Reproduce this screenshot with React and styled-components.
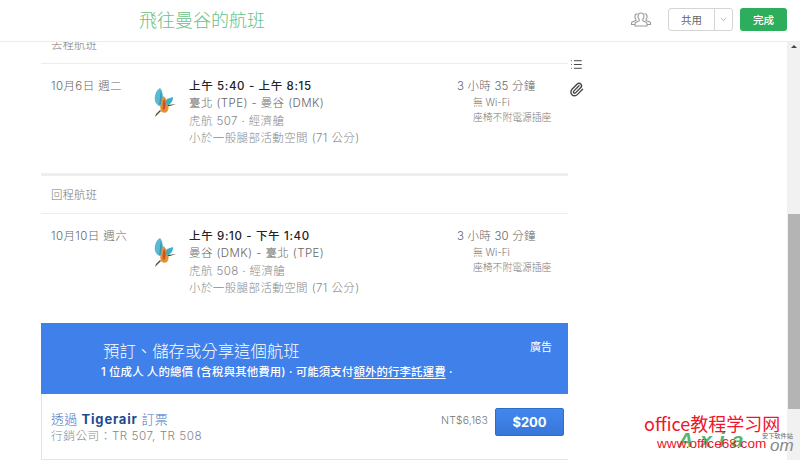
import React from 'react';
import styled, { createGlobalStyle } from 'styled-components';
import { List, Paperclip, ChevronDown } from 'lucide-react';

const Global = createGlobalStyle`
  html, body { margin: 0; padding: 0; background: #fff; }
  body { width: 800px; height: 460px; overflow: hidden; font-family: "Inter", "Noto Sans CJK TC", sans-serif; }
  * { box-sizing: border-box; }
`;

const Page = styled.div`
  position: relative; width: 800px; height: 460px; overflow: hidden;
  display: flex; flex-direction: column; background: #fff;
`;
const Header = styled.header`
  height: 42px; flex: none; display: flex; align-items: center; position: relative; z-index: 2; background: #fff;
  padding: 0 13px 3px 139px; border-bottom: 1px solid #ececec;
`;
const Title = styled.h1`
  margin: 0; flex: 1; font-size: 18px; line-height: 24px; font-weight: 300; color: #68c188;
  font-family: "Noto Sans CJK TC", sans-serif;
`;
const PeopleIcon = styled.svg`width: 20px; height: 15px; margin-right: 17px; flex: none;`;
const SplitButton = styled.div`
  width: 65px; height: 23px; display: flex; border: 1px solid #d4d4d4; border-radius: 3px;
  margin-right: 7px; background: #fff;
`;
const SplitLabel = styled.span`
  flex: 1; display: flex; align-items: center; justify-content: center;
  font-size: 10.5px; color: #666; border-right: 1px solid #d4d4d4;
`;
const SplitCaret = styled.span`
  width: 17px; display: flex; align-items: center; justify-content: center; color: #999;
`;
const DoneButton = styled.button`
  width: 47px; height: 23px; border: 0; border-radius: 3px; padding: 0; background: #2dae5c; color: #fff;
  font: 500 10.5px "Noto Sans CJK TC", sans-serif;
`;
const Body = styled.div`flex: 1; display: flex; min-height: 0;`;
const Main = styled.main`
  width: 527px; margin-left: 41px; flex: none; margin-top: -8px;
`;
const SectionTitle = styled.div`
  height: ${p => p.$h}px; padding: 0 0 10px 10px; display: flex; align-items: flex-end; font-size: 11.5px; line-height: 16px; color: #777;
  border-bottom: 1px solid #ececec; font-weight: 300;
`;
const Flight = styled.section`
  height: ${p => p.$h}px; padding: 14px 0 0 10px; display: flex; align-items: flex-start;
  border-bottom: ${p => (p.$divider ? '3px solid #eeeeee' : '0')};
`;
const DateCol = styled.div`
  width: 102px; flex: none; font-size: 11.5px; line-height: 17px; color: #666; font-weight: 300; letter-spacing: .4px; white-space: nowrap;
`;
const BirdBox = styled.svg`width: 24px; height: 31px; flex: none; margin: 9px 12px 0 0;`;
const Details = styled.div`width: 268px; flex: none;`;
const Line = styled.div`
  font-size: 11.5px; line-height: 17.3px; white-space: nowrap; letter-spacing: .4px;
  color: ${p => p.$color || '#666'}; font-weight: 300;
`;
const Times = styled(Line)`color: #222; font-weight: 500; letter-spacing: .65px;`;
const Extra = styled.div`flex: none;`;
const Duration = styled.div`font-size: 11.5px; line-height: 17px; color: #666; font-weight: 300; letter-spacing: .2px;`;
const Amenity = styled.div`
  padding-left: 16px; font-size: 9.8px; line-height: 15px; color: #777; font-weight: 300; white-space: nowrap;
  &:first-of-type { margin-top: 1px; }
`;
const AdBanner = styled.div`
  height: 71px; margin-top: 3px; background: #3f80ea; color: #fff; display: flex; position: relative;
  padding: 16px 0 0 60px; flex-direction: column;
`;
const AdTitle = styled.div`font-size: 16.4px; line-height: 22px; margin-left: 2px; font-family: "Noto Sans CJK TC", sans-serif; font-weight: 300;`;
const AdSub = styled.div`font-size: 11.4px; line-height: 15px; font-weight: 500; margin-top: 4px; white-space: nowrap; letter-spacing: .15px;
  u { text-underline-offset: 2px; }
`;
const AdTag = styled.span`position: absolute; top: 17px; right: 16px; font-size: 11px; line-height: 15px;`;
const OfferRow = styled.div`
  height: 66px; display: flex; align-items: flex-start; padding: 14px 4px 0 9px; border-left: 1px solid #e4e4e4; border-bottom: 1px solid #e4e4e4;
`;
const OfferInfo = styled.div`flex: 1; margin-top: 2px;`;
const OfferName = styled.div`font-size: 13px; line-height: 18px; color: #3b74c4; font-weight: 300; letter-spacing: .3px; b { color: #1e4b8e; font-weight: 700; letter-spacing: .8px; }`;
const OfferMeta = styled.div`font-size: 11.7px; line-height: 17px; color: #888; font-weight: 300; letter-spacing: .5px;`;
const OfferPrice = styled.span`font-size: 10.5px; line-height: 16px; color: #777; font-weight: 300; margin: 5px 7px 0 0; letter-spacing: .1px;`;
const PriceButton = styled.button`
  width: 69px; height: 28px; padding: 0; border: 1px solid #2e6cc9; border-radius: 2px; background: linear-gradient(#4287ee, #3876d9);
  color: #fff; font: 700 13px "Inter", sans-serif;
`;
const SideTools = styled.aside`
  width: 16px; flex: none; display: flex; flex-direction: column; align-items: center;
  gap: 11px; padding-top: 16px; color: #444;
`;
const Spacer = styled.div`flex: 1;`;
const Scrollbar = styled.div`
  width: 13px; flex: none; background: #f1f1f1; position: relative;
`;
const ScrollUp = styled.span`
  position: absolute; top: 3px; left: 4px; width: 0; height: 0;
  border-left: 3px solid transparent; border-right: 3px solid transparent; border-bottom: 3px solid #444;
`;
const ScrollThumb = styled.div`
  position: absolute; top: 172px; left: 1px; right: 0; height: 195px; background: #b4b4b4;
`;
const Watermark = styled.div`
  position: absolute; left: 644px; top: 413px; width: 150px; height: 47px; pointer-events: none;
`;
const WaterMain = styled.div`
  position: absolute; left: 0; top: 0; font: 400 18px/20px "Noto Sans CJK SC", sans-serif; color: #f0142c; white-space: nowrap;
`;
const WaterUrl = styled.div`
  position: absolute; left: 13px; top: 22px; font: 400 13.6px/18px "Liberation Sans", sans-serif; color: #f0142c; white-space: nowrap; z-index: 2;
`;
const WaterLogo = styled.div`
  position: absolute; left: 34px; top: 15px; font: italic 700 21px/24px "Liberation Sans", sans-serif; color: #57b36b; letter-spacing: 7px; white-space: nowrap;
`;
const WaterEnd = styled.div`
  position: absolute; left: 126px; top: 24px; font: italic 400 17px/18px "Liberation Sans", sans-serif; color: #888; white-space: nowrap;
`;
const WaterTag = styled.div`
  position: absolute; left: 118px; top: 18px; font: 400 6.2px/10px "Noto Sans CJK SC", sans-serif; color: #666; white-space: nowrap; z-index: 3;
`;

const Bird = () => (
  <BirdBox viewBox="0 0 24 31">
    <path d="M7 1C3 3 1 9 2 14c1 3 4 6 7 5l1-8C10 7 9 3 7 1Z" fill="#5bb9d4" />
    <path d="M8 3c1 4 1 9 0 14l-2 1c1-5 1-10 2-15Z" fill="#3a97b6" />
    <path d="M10 9c2 1 4 4 5 7 1 3 1 6-1 9-2 1-5 1-6-1-1-3-1-5 0-7l2-8Z" fill="#e8902f" />
    <path d="M11 12c2 2 2 6 1 10l-2 1c-1-3 0-8 1-11Z" fill="#c9542a" />
    <path d="M14 12l6-2c0 3-1 5-3 7l-3 2-1-4 1-3Z" fill="#38b0c4" />
    <path d="M15 18l8-1-6 2-2 0Z" fill="#4a4a4a" />
    <path d="M8 24l-6 6 1-3 4-4 1 1Z" fill="#5a4a35" />
  </BirdBox>
);

const People = () => (
  <PeopleIcon viewBox="0 0 20 15" fill="none" stroke="#999" strokeWidth="1.1" strokeLinejoin="round">
    <path d="M6.5 1.8c-1.6 0-2.6 1.2-2.6 2.8 0 1 .4 2 1 2.6v1.2L1.2 10c-.5.3-.7.8-.7 1.3v1.2h5" />
    <path d="M13.5 1.8c1.6 0 2.6 1.2 2.6 2.8 0 1-.4 2-1 2.6v1.2l3.7 1.6c.5.3.7.8.7 1.3v1.2h-5" />
    <path d="M10 1c-1.9 0-3 1.4-3 3.2 0 1.1.4 2.3 1.2 3v1.6l-3.5 1.6c-.5.3-.7.7-.7 1.2V14h12v-2.4c0-.5-.2-.9-.7-1.2l-3.5-1.6V7.2c.8-.7 1.2-1.9 1.2-3C13 2.4 11.9 1 10 1Z" fill="#fff" />
  </PeopleIcon>
);

const FlightRow = ({ date, times, route, carrier, legroom, duration, h, divider }) => (
  <Flight $h={h} $divider={divider}>
    <DateCol>{date}</DateCol>
    <Bird />
    <Details>
      <Times>{times}</Times>
      <Line>{route}</Line>
      <Line $color="#888">{carrier}</Line>
      <Line $color="#888">{legroom}</Line>
    </Details>
    <Extra>
      <Duration>{duration}</Duration>
      <Amenity>無 Wi-Fi</Amenity>
      <Amenity>座椅不附電源插座</Amenity>
    </Extra>
  </Flight>
);

export default function App() {
  return (
    <Page>
      <Global />
      <Header>
        <Title>飛往曼谷的航班</Title>
        <People />
        <SplitButton>
          <SplitLabel>共用</SplitLabel>
          <SplitCaret><ChevronDown size={9} /></SplitCaret>
        </SplitButton>
        <DoneButton>完成</DoneButton>
      </Header>
      <Body>
        <Main>
          <SectionTitle $h={30}>去程航班</SectionTitle>
          <FlightRow h={112} divider date="10月6日 週二" times="上午 5:40 - 上午 8:15" route="臺北 (TPE) - 曼谷 (DMK)" carrier="虎航 507 · 經濟艙" legroom="小於一般腿部活動空間 (71 公分)" duration="3 小時 35 分鐘" />
          <SectionTitle $h={38}>回程航班</SectionTitle>
          <FlightRow h={106} date="10月10日 週六" times="上午 9:10 - 下午 1:40" route="曼谷 (DMK) - 臺北 (TPE)" carrier="虎航 508 · 經濟艙" legroom="小於一般腿部活動空間 (71 公分)" duration="3 小時 30 分鐘" />
          <AdBanner>
            <AdTitle>預訂、儲存或分享這個航班</AdTitle>
            <AdSub>1 位成人 人的總價 (含稅與其他費用) · 可能須支付<u>額外的行李託運費</u> ·</AdSub>
            <AdTag>廣告</AdTag>
          </AdBanner>
          <OfferRow>
            <OfferInfo>
              <OfferName>透過 <b>Tigerair</b> 訂票</OfferName>
              <OfferMeta>行銷公司：TR 507, TR 508</OfferMeta>
            </OfferInfo>
            <OfferPrice>NT$6,163</OfferPrice>
            <PriceButton>$200</PriceButton>
          </OfferRow>
        </Main>
        <SideTools>
          <List size={13} strokeWidth={1.8} />
          <Paperclip size={15} strokeWidth={2.2} />
        </SideTools>
        <Spacer />
        <Scrollbar>
          <ScrollUp />
          <ScrollThumb />
        </Scrollbar>
      </Body>
      <Watermark>
        <WaterLogo>Axia</WaterLogo>
        <WaterEnd>om</WaterEnd>
        <WaterTag>安下软件站</WaterTag>
        <WaterMain>office教程学习网</WaterMain>
        <WaterUrl>www.office68.com</WaterUrl>
      </Watermark>
    </Page>
  );
}
